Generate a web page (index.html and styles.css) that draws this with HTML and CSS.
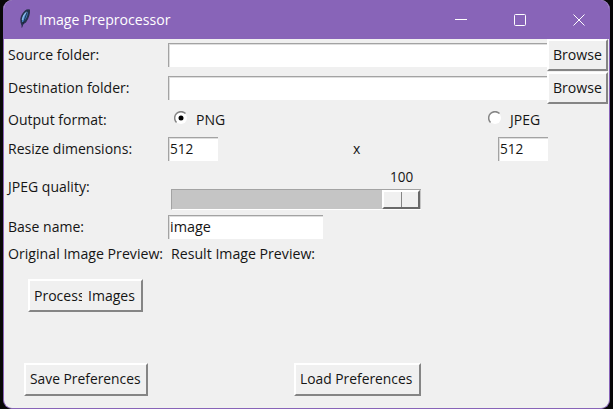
FILE: index.html
```html
<!DOCTYPE html>
<html lang="en">
<head>
<meta charset="utf-8">
<title>Image Preprocessor</title>
<link rel="stylesheet" href="styles.css">
</head>
<body>
<div class="window">
  <header class="titlebar">
    <svg class="feather" width="14" height="22" viewBox="0 0 14 22"><path d="M4 19 2.500 14.500Q1 8 7 2.500Q9 .5 12 1.500Q12.500 8 8 14.500L4 17Z" fill="#26334d"/><path d="M4 14Q3 8 10 3Q10 9 5.500 14Z" fill="#4583c4"/><path d="M4.500 12Q5 7 9 4" stroke="#8abbe8" stroke-width="1.500" fill="none"/><path d="M9.500 3 3.800 19.500" stroke="#17213a" stroke-width=".8" fill="none"/></svg>
    <h1 class="title">Image Preprocessor</h1>
    <div class="controls">
      <svg width="12" height="12" viewBox="0 0 12 12"><path d="M0 5.500H12"/></svg>
      <svg width="12" height="12" viewBox="0 0 12 12"><rect x=".5" y=".5" width="11" height="11" rx="1"/></svg>
      <svg width="12" height="12" viewBox="0 0 12 12"><path d="M.5 .5 11.500 11.500M11.500 .5 .5 11.500"/></svg>
    </div>
  </header>
  <main class="form">
    <div class="row folder"><span class="label"><span class="t">Source folder:</span></span><div class="entry wide"></div><button class="btn browse"><span class="t">Browse</span></button></div>
    <div class="row folder"><span class="label"><span class="t">Destination folder:</span></span><div class="entry wide"></div><button class="btn browse"><span class="t">Browse</span></button></div>
    <div class="row format"><span class="label"><span class="t">Output format:</span></span>
      <div class="option png"><svg class="radio" width="14" height="14" viewBox="0 0 14 14"><circle cx="7" cy="7" r="6" fill="#fff"/><path d="M2.500 11.500A6 6 0 0 1 11.500 2.500" fill="none" stroke="#858585" stroke-width="1.500"/><circle cx="7" cy="7" r="2.500"/></svg><span class="t">PNG</span></div>
      <div class="option"><svg class="radio" width="14" height="14" viewBox="0 0 14 14"><circle cx="7" cy="7" r="6" fill="#fff"/><path d="M2.500 11.500A6 6 0 0 1 11.500 2.500" fill="none" stroke="#858585" stroke-width="1.500"/></svg><span class="t">JPEG</span></div>
    </div>
    <div class="row resize"><span class="label"><span class="t">Resize dimensions:</span></span><div class="entry small"><span class="t">512</span></div><div class="times"><span class="t">x</span></div><div class="entry small"><span class="t">512</span></div></div>
    <div class="row quality"><span class="label"><span class="t">JPEG quality:</span></span>
      <div class="scale"><div class="value"><span class="t">100</span></div><div class="trough"><div class="slider"><i></i><i></i></div></div></div>
    </div>
    <div class="row base"><span class="label"><span class="t">Base name:</span></span><div class="entry name"><span class="t">image</span></div></div>
    <div class="row previews"><span class="label"><span class="t">Original Image Preview:</span></span><span class="result"><span class="t">Result Image Preview:</span></span></div>
    <div class="row process"><button class="btn run"><span class="clip"><span class="t">Process</span></span><span class="t">Images</span></button></div>
    <div class="row prefs"><button class="btn save"><span class="t">Save Preferences</span></button><button class="btn load"><span class="t">Load Preferences</span></button></div>
  </main>
</div>
</body>
</html>
```
FILE: styles.css
```css
* { box-sizing: border-box; }
html, body { margin: 0; height: 100%; background: #080808; overflow: hidden; }
body { padding: 0 3px; font: 15px/20px "Open Sans", "Noto Sans", sans-serif; color: #151515; }
.window { width: 607px; height: 409px; border: 1px solid #8864b8; border-top: 0; border-radius: 9px; background: #f0f0f0; overflow: hidden; }
.titlebar { height: 39px; display: flex; align-items: center; background: #8864b8; padding: 0 24px 0 14px; color: #fff; }
.feather { margin-top: -2px; }
.title { margin: -2px 0 0 7px; font: 400 15px/20px "Open Sans", sans-serif; transform: scaleX(.94); transform-origin: left; white-space: nowrap; }
.controls { margin-left: auto; display: flex; gap: 47px; }
.controls svg { fill: none; stroke: #fff; stroke-width: 1; }
.row { display: flex; align-items: center; }
.t { display: inline-block; white-space: nowrap; transform: translateY(-1px) scaleX(.935); transform-origin: left; }
.label { width: 164px; padding-left: 4px; flex: none; }
.folder { height: 32.500px; }
.entry { height: 24px; background: #fff; border: 0 solid #a3a3a3; border-width: 1px 0 0 1px; box-shadow: inset 1px 1px #dedede; padding-left: 1px; line-height: 22px; flex: none; }
.entry .t { transform: translateY(-1px) scaleX(.91); }
.wide { width: 379px; }
.small { width: 50px; }
.name { width: 155px; }
.name .t { transform: translateY(-1px) scaleX(.96); }
.btn { height: 33px; padding: 0 0 0 4px; border: 2px solid; border-color: #fff #858585 #858585 #fff; background: #f0f0f0; font: inherit; color: inherit; text-align: left; white-space: nowrap; overflow: hidden; flex: none; }
.browse { width: 61px; height: 32px; }
.browse .t { transform: translateY(-1px) scaleX(.94); }
.format { height: 31px; }
.option { display: flex; align-items: center; gap: 8px; padding-left: 6px; }
.radio { margin-top: -3px; }
.png { width: 314px; }
.resize { height: 28px; }
.times { width: 280px; padding-left: 135px; }
.quality { height: 51px; padding-bottom: 4px; }
.scale { width: 250px; margin-left: 3px; padding-top: 3px; }
.value { padding-left: 219px; height: 22px; line-height: 19px; }
.value .t { transform: translateY(0) scaleX(.9); }
.trough { height: 21px; background: #c5c5c5; border: 1px solid #a3a3a3; border-bottom-color: #fff; border-right: 0; display: flex; justify-content: flex-end; padding-right: 1px; }
.slider { width: 38px; height: 19px; display: flex; border: 2px solid; border-color: #fff #696969 #696969 #fff; background: #f0f0f0; }
.slider i { flex: 1; }
.slider i + i { border-left: 1px solid #858585; }
.base { height: 26px; }
.previews { height: 27px; }
.previews .t { transform: translateY(-1px) scaleX(.943); }
.result { margin-left: 3px; }
.process { padding: 12px 0 0 24px; }
.run { width: 115px; display: flex; align-items: center; }
.clip { width: 48px; margin-right: 6px; overflow: hidden; height: 20px; }
.prefs { padding: 51px 0 0 20px; }
.save { width: 124px; margin-right: 146px; }
.load { width: 127px; }
.prefs .t { transform: translateY(-2px) scaleX(.922); }
```
